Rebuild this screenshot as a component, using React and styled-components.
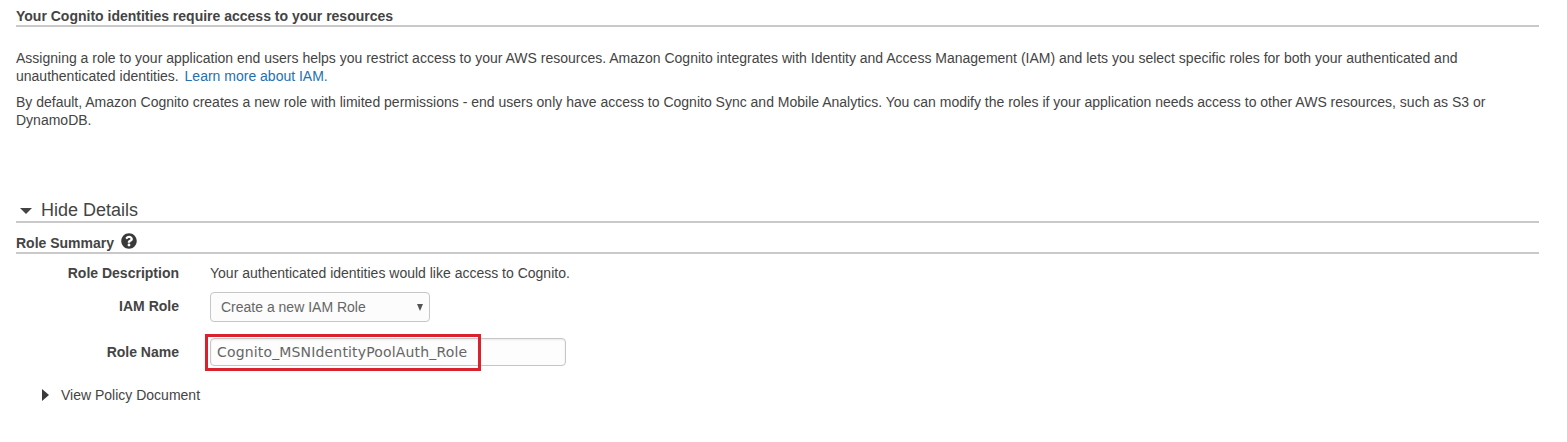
import React from "react";
import styled, { createGlobalStyle } from "styled-components";
import { FaQuestionCircle } from "react-icons/fa";

const GlobalStyle = createGlobalStyle`
  * { box-sizing: border-box; }
  body {
    margin: 0;
    background: #fff;
    color: #444;
    font: 14px/18px "Liberation Sans", Arial, sans-serif;
  }
`;

const Page = styled.main`
  height: 442px;
  padding: 7px 28px 0 16px;
`;

const Heading = styled.h2`
  display: flex;
  align-items: ${(p) => p.$align || "flex-start"};
  height: ${(p) => p.$height}px;
  margin: 0;
  border-bottom: 2px solid #c9c9c9;
  font-size: 14px;
  line-height: 18px;
`;

const Intro = styled.section`
  height: 172px;
  padding-top: 22px;
`;

const Paragraph = styled.p`
  margin: 0 0 8px;
  max-width: 1500px;
`;

const Link = styled.a`
  display: inline-block;
  margin-left: 2px;
  color: #2271b0;
  text-decoration: none;
`;

const DetailsToggle = styled.div`
  display: flex;
  align-items: flex-start;
  gap: 9px;
  height: 24px;
  padding-left: 4px;
  border-bottom: 2px solid #c9c9c9;
  font-size: 18px;
  line-height: 22px;
  cursor: pointer;
`;

const DownCaret = styled.svg`
  width: 12px;
  height: 6px;
  margin-top: 9px;
  fill: #444;
`;

const HelpIcon = styled(FaQuestionCircle)`
  width: 16px;
  height: 16px;
  margin: 0 0 3px 7px;
  color: #3a3a3a;
`;

const Form = styled.div`
  display: flex;
  flex-direction: column;
  padding-top: 10px;
`;

const Row = styled.div`
  display: grid;
  grid-template-columns: 163px 1fr;
  column-gap: 31px;
  height: ${(p) => p.$height}px;
`;

const Label = styled.label`
  padding-top: ${(p) => p.$top || 0}px;
  font-weight: bold;
  text-align: right;
`;

const SelectBox = styled.div`
  display: flex;
  align-items: center;
  justify-content: space-between;
  width: 220px;
  height: 30px;
  padding: 0 6px 0 10px;
  border: 1px solid #c6c6c6;
  border-radius: 4px;
  background: #fcfcfc;
  color: #666;
`;

const SelectCaret = styled.svg`
  width: 6px;
  height: 7px;
  fill: #555;
`;

const NameField = styled.div`
  position: relative;
  width: 356px;
  height: 28px;
`;

const NameInput = styled.input`
  display: block;
  width: 100%;
  height: 100%;
  padding: 0 6px;
  border: 1px solid #c6c6c6;
  border-radius: 4px;
  outline: 0;
  background: #fdfdfd;
  box-shadow: inset 0 1px 2px #e9e9e9;
  color: #666;
  font: 14px "DejaVu Sans", Verdana, sans-serif;
  letter-spacing: 0.16px;
`;

const Highlight = styled.span`
  position: absolute;
  top: -4px;
  left: -5px;
  width: 276px;
  height: 37px;
  border: 3px solid #d9222d;
  pointer-events: none;
`;

const PolicyToggle = styled.div`
  display: flex;
  align-items: center;
  gap: 12px;
  height: 18px;
  padding-left: 26px;
  cursor: pointer;
`;

const RightCaret = styled.svg`
  width: 7px;
  height: 12px;
  fill: #3a3a3a;
`;

export default function App() {
  return (
    <>
      <GlobalStyle />
      <Page>
        <Heading $height={20}>Your Cognito identities require access to your resources</Heading>
        <Intro>
          <Paragraph>
            Assigning a role to your application end users helps you restrict access to your AWS resources. Amazon
            Cognito integrates with Identity and Access Management (IAM) and lets you select specific roles for both
            your authenticated and unauthenticated identities. <Link>Learn more about IAM.</Link>
          </Paragraph>
          <Paragraph>
            By default, Amazon Cognito creates a new role with limited permissions - end users only have access to
            Cognito Sync and Mobile Analytics. You can modify the roles if your application needs access to other AWS
            resources, such as S3 or DynamoDB.
          </Paragraph>
        </Intro>
        <DetailsToggle>
          <DownCaret viewBox="0 0 12 6"><path d="M0 0h12L6 6z" /></DownCaret>
          Hide Details
        </DetailsToggle>
        <Heading $height={31} $align="flex-end">
          Role Summary
          <HelpIcon />
        </Heading>
        <Form>
          <Row $height={28}>
            <Label as="span">Role Description</Label>
            <span>Your authenticated identities would like access to Cognito.</span>
          </Row>
          <Row $height={46}>
            <Label as="span" $top={5}>IAM Role</Label>
            <SelectBox>
              Create a new IAM Role
              <SelectCaret viewBox="0 0 6 7"><path d="M0 0h6L3 7z" /></SelectCaret>
            </SelectBox>
          </Row>
          <Row $height={48}>
            <Label htmlFor="role-name" $top={5}>Role Name</Label>
            <NameField>
              <NameInput id="role-name" defaultValue="Cognito_MSNIdentityPoolAuth_Role" />
              <Highlight />
            </NameField>
          </Row>
          <PolicyToggle>
            <RightCaret viewBox="0 0 7 12"><path d="M0 0l7 6-7 6z" /></RightCaret>
            View Policy Document
          </PolicyToggle>
        </Form>
      </Page>
    </>
  );
}
